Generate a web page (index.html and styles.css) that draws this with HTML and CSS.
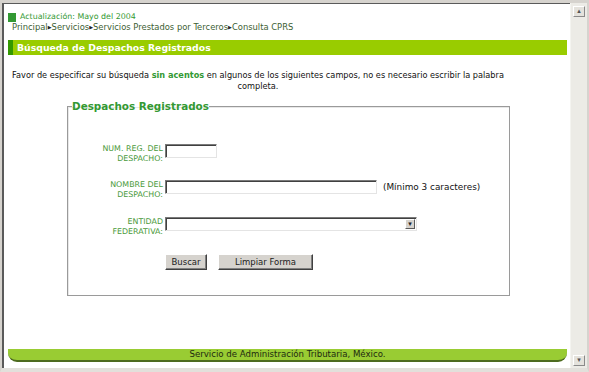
FILE: index.html
```html
<!DOCTYPE html>
<html lang="es">
<head>
    <meta charset="UTF-8">
    <title>Consulta CPRS</title>
    <link rel="stylesheet" href="styles.css">
</head>
<body>
    <div class="window">
        <div class="page">
            <div class="update"><span class="square"></span>Actualización: Mayo del 2004</div>
            <div class="crumbs">Principal<span class="arrow">▶</span>Servicios<span class="arrow">▶</span>Servicios Prestados por Terceros<span class="arrow">▶</span>Consulta CPRS</div>
            <div class="section-bar">Búsqueda de Despachos Registrados</div>

            <p class="intro">Favor de especificar su búsqueda <strong>sin acentos</strong> en algunos de los siguientes campos, no es necesario escribir la palabra<br>completa.</p>

            <fieldset class="search-box">
                <legend>Despachos Registrados</legend>
                <div class="field-row">
                    <label class="field-label">NUM. REG. DEL<br>DESPACHO:</label>
                    <input type="text" class="txt txt-short">
                </div>
                <div class="field-row">
                    <label class="field-label">NOMBRE DEL<br>DESPACHO:</label>
                    <input type="text" class="txt txt-long">
                    <span class="hint">(Mínimo 3 caracteres)</span>
                </div>
                <div class="field-row">
                    <label class="field-label">ENTIDAD<br>FEDERATIVA:</label>
                    <span class="select-wrap">
                        <select class="txt txt-select"><option></option></select>
                        <span class="select-arrow">▾</span>
                    </span>
                </div>
                <div class="actions">
                    <button class="btn btn-search">Buscar</button>
                    <button class="btn btn-clear">Limpiar Forma</button>
                </div>
            </fieldset>

            <div class="spacer"></div>
            <div class="footer-bar">Servicio de Administración Tributaria, México.</div>
        </div>
        <div class="scrollbar">
            <div class="scroll-btn">▴</div>
            <div class="scroll-btn">▾</div>
        </div>
    </div>
</body>
</html>
```

FILE: styles.css
```css
body {
    margin: 0;
    font-family: 'DejaVu Sans', Verdana, sans-serif;
    background: #d6d3ce;
}
.window {
    display: flex;
    height: 372px;
    box-sizing: border-box;
    border-top: 3px solid #d6d3ce;
    border-left: 2px solid #d6d3ce;
    border-right: 2px solid #d6d3ce;
    border-bottom: 4px solid #e2e0db;
}
.page {
    flex: 1;
    display: flex;
    flex-direction: column;
    background: #ffffff;
    border-top: 1px solid #5a5a5a;
    border-left: 2px solid #5a5a5a;
    padding: 0 3px 0 4px;
}
.update {
    display: flex;
    align-items: center;
    margin-top: 8px;
    font-size: 7.9px;
    line-height: 10px;
    color: #339933;
}
.square {
    width: 8px;
    height: 9px;
    background: #339933;
    margin-right: 4px;
}
.crumbs {
    margin: 0 0 0 4px;
    font-size: 8.4px;
    line-height: 10px;
    color: #3c5e32;
}
.arrow {
    font-size: 5px;
    color: #222;
    vertical-align: 1px;
}
.section-bar {
    margin-top: 8px;
    height: 15px;
    line-height: 15px;
    background: #99cc00;
    border-left: 5px solid #339900;
    padding-left: 4px;
    color: #ffffff;
    font-weight: bold;
    font-size: 9.3px;
}
.intro {
    margin: 15px 0 0 0;
    width: 500px;
    text-align: center;
    font-size: 8.2px;
    line-height: 11px;
    color: #111;
}
.intro strong {
    color: #339933;
}
.search-box {
    margin: 8px 0 0 59px;
    width: 443px;
    padding: 32px 0 20px 0;
    border: 1px solid #9a9a9a;
    box-shadow: inset 1px 1px #e8e8e8;
    box-sizing: border-box;
    height: 196px;
}
.search-box legend {
    margin-left: 4px;
    padding: 0;
    font-size: 10.4px;
    font-weight: bold;
    line-height: 12px;
    color: #339933;
}
.field-row {
    display: flex;
    align-items: flex-start;
    height: 20px;
    margin-bottom: 16px;
}
.field-row + .field-row {
    margin-bottom: 17px;
}
.field-label {
    width: 95px;
    margin-right: 2px;
    text-align: right;
    font-size: 7.9px;
    line-height: 10px;
    color: #4a9a3a;
}
.txt {
    height: 14px;
    box-sizing: border-box;
    border: 1px solid;
    border-color: #7a7a7a #e4e4e4 #e4e4e4 #7a7a7a;
    box-shadow: inset 1px 1px #404040;
    background: #ffffff;
    padding: 0;
    margin: 0;
}
.txt-short {
    width: 52px;
}
.txt-long {
    width: 212px;
}
.hint {
    margin-left: 6px;
    font-size: 8.9px;
    line-height: 14px;
    color: #111;
}
.select-wrap {
    position: relative;
    display: block;
}
.txt-select {
    display: block;
    width: 252px;
    appearance: none;
}
.select-arrow {
    position: absolute;
    right: 2px;
    top: 2px;
    width: 10px;
    height: 10px;
    box-sizing: border-box;
    background: #d6d3ce;
    border: 1px solid;
    border-color: #ffffff #5a5a5a #5a5a5a #ffffff;
    font-size: 7px;
    line-height: 8px;
    text-align: center;
    color: #222;
}
.actions {
    display: flex;
    gap: 11px;
    padding-left: 97px;
    margin-top: 4px;
}
.btn {
    height: 16px;
    box-sizing: border-box;
    padding: 0;
    background: #d6d3ce;
    border: 1px solid;
    border-color: #ffffff #404040 #404040 #ffffff;
    box-shadow: inset -1px -1px #808080;
    font-family: 'DejaVu Sans', Verdana, sans-serif;
    font-size: 8.5px;
    color: #222;
}
.btn-search {
    width: 42px;
}
.btn-clear {
    width: 95px;
}
.spacer {
    flex: 1;
}
.footer-bar {
    margin: 0 0 6px 0;
    height: 13px;
    width: 559px;
    box-sizing: border-box;
    background: #99cc33;
    border-bottom: 2px solid #4d6b1f;
    border-radius: 0 0 9px 9px;
    text-align: center;
    font-size: 8.6px;
    line-height: 11px;
    color: #1e2a10;
}
.scrollbar {
    width: 16px;
    display: flex;
    flex-direction: column;
    justify-content: space-between;
    align-items: center;
    background: #ecebe6;
    padding: 3px 0 2px 0;
    border-left: 1px solid #f4f4f0;
}
.scroll-btn {
    width: 12px;
    height: 11px;
    box-sizing: border-box;
    background: #e4e2dc;
    border: 1px solid;
    border-color: #ffffff #8a8a8a #8a8a8a #ffffff;
    font-size: 7px;
    line-height: 9px;
    text-align: center;
    color: #555;
}
```
